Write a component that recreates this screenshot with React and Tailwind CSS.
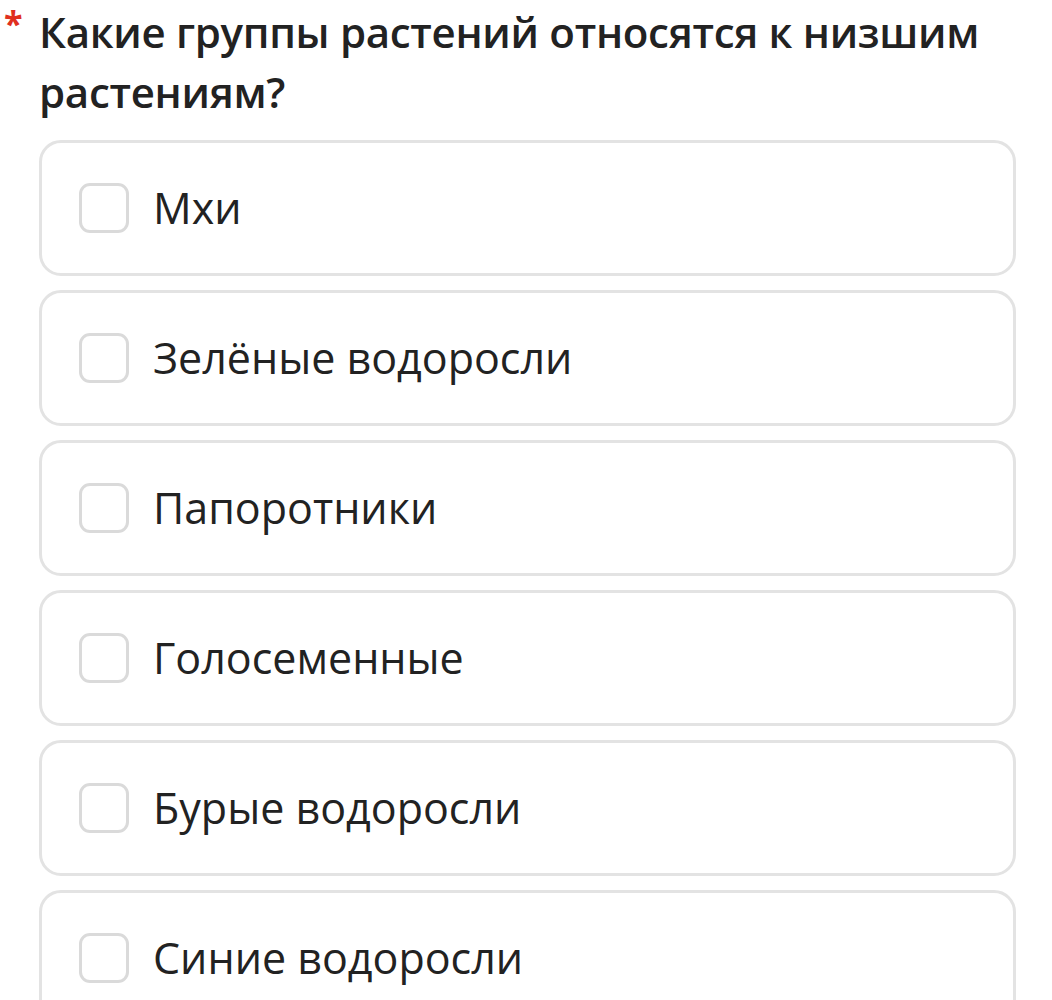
import React from 'react';

const options = [
  'Мхи',
  'Зелёные водоросли',
  'Папоротники',
  'Голосеменные',
  'Бурые водоросли',
  'Синие водоросли',
];

const Option = ({ label }) => (
  <label className="flex items-center h-[136px] rounded-[22px] border-[3px] border-[#e3e3e3] bg-white pl-[37px] cursor-pointer">
    <span className="block w-[50px] h-[50px] shrink-0 rounded-[11px] border-[3px] border-[#dadada] bg-white" />
    <span className="ml-[24px] -mt-[2px] text-[43px] leading-none text-[#222]">{label}</span>
  </label>
);

export default function App() {
  return (
    <div className="min-h-screen bg-white font-['Open_Sans',sans-serif] overflow-hidden">
      <div className="relative pl-[39px] pr-[36px] pt-[2px]">
        <span className="absolute left-[4px] top-[6px] text-[34px] leading-none font-bold text-[#e0301e]">*</span>
        <h1 className="text-[42px] leading-[60px] font-semibold text-[#222] tracking-[-0.3px]">
          Какие группы растений относятся к низшим растениям?
        </h1>
      </div>
      <div className="mt-[18px] ml-[39px] mr-[36px] flex flex-col gap-[14px]">
        {options.map((o) => (
          <Option key={o} label={o} />
        ))}
      </div>
    </div>
  );
}
